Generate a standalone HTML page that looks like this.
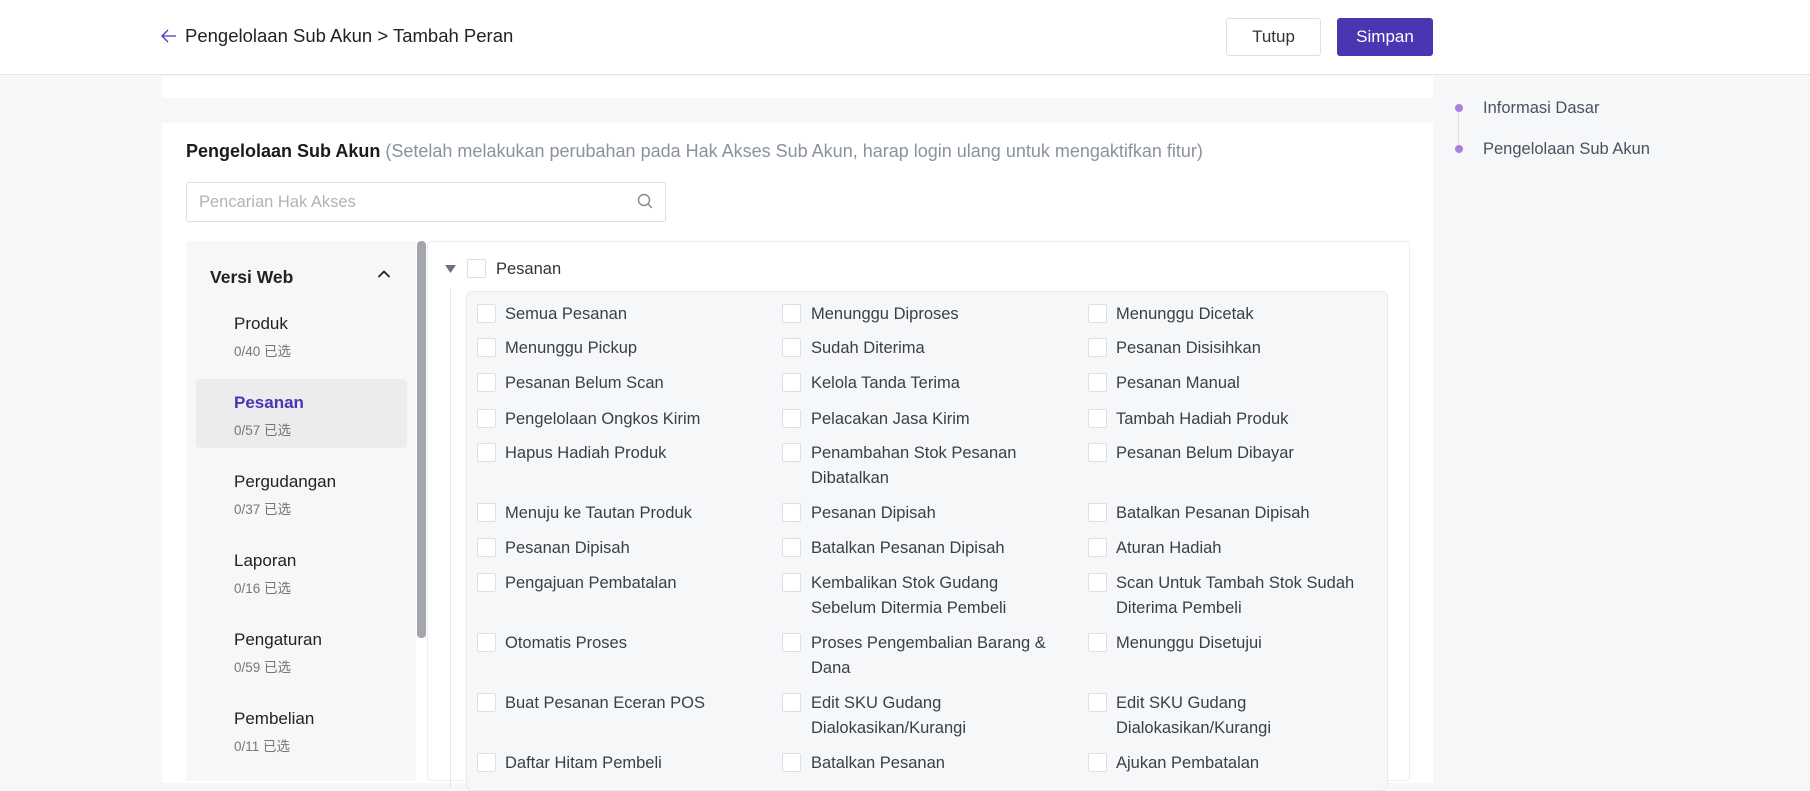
<!DOCTYPE html>
<html><head><meta charset="utf-8"><style>
*{box-sizing:border-box;margin:0;padding:0}
body{width:1810px;height:777px;overflow:hidden;background:#f6f7f9;font-family:"Liberation Sans","Noto Sans CJK SC",sans-serif;color:#222;position:relative}
.a{position:absolute}
.hdr{left:0;top:0;width:1810px;height:75px;background:#fff;border-bottom:1px solid #e6e7ea}
.btn{top:18px;height:38px;border-radius:3px;font-size:17px;display:flex;align-items:center;justify-content:center}
.cb{position:absolute;width:19px;height:19px;background:#fff;border:1px solid #dcdfe3;border-radius:2px}
.it{position:absolute;font-size:16.5px;color:#3a3f47;line-height:25px}
.nm{position:absolute;left:234px;font-size:17px;color:#222}
.sb{position:absolute;left:234px;font-size:13.5px;color:#777}
</style></head><body>
<div class="a hdr"></div>
<svg class="a" style="left:160px;top:28px" width="18" height="16" viewBox="0 0 18 16"><path d="M16 8H3M8 2L2 8l6 6" stroke="#4b36b3" stroke-width="1.3" fill="none"/></svg>
<div class="a" style="left:185px;top:25px;font-size:18.5px;color:#222">Pengelolaan Sub Akun &gt; Tambah Peran</div>
<div class="a btn" style="left:1226px;width:95px;border:1px solid #dcdfe3;background:#fff;color:#333">Tutup</div>
<div class="a btn" style="left:1337px;width:96px;background:#4a35b3;color:#fff">Simpan</div>

<div class="a" style="left:162px;top:76px;width:1271px;height:22px;background:#fff"></div>
<div class="a" style="left:162px;top:123px;width:1271px;height:660px;background:#fff"></div>

<div class="a" style="left:1455px;top:104px;width:8px;height:8px;border-radius:50%;background:#a880e0"></div>
<div class="a" style="left:1458px;top:112px;width:1px;height:34px;background:#ddd"></div>
<div class="a" style="left:1455px;top:145px;width:8px;height:8px;border-radius:50%;background:#a880e0"></div>
<div class="a" style="left:1483px;top:99px;font-size:16.5px;color:#4a5160">Informasi Dasar</div>
<div class="a" style="left:1483px;top:140px;font-size:16.5px;color:#4a5160">Pengelolaan Sub Akun</div>

<div class="a" style="left:186px;top:141px;font-size:18px;white-space:nowrap"><b style="color:#1a1a1a">Pengelolaan Sub Akun</b> <span style="color:#8a929f">(Setelah melakukan perubahan pada Hak Akses Sub Akun, harap login ulang untuk mengaktifkan fitur)</span></div>
<div class="a" style="left:186px;top:182px;width:480px;height:40px;border:1px solid #dcdfe3;border-radius:3px"></div>
<div class="a" style="left:199px;top:193px;font-size:16.5px;color:#b0b4ba">Pencarian Hak Akses</div>
<svg class="a" style="left:637px;top:193px" width="17" height="17" viewBox="0 0 17 17"><circle cx="7" cy="7" r="5.5" stroke="#888" stroke-width="1.4" fill="none"/><path d="M11 11l4 4" stroke="#888" stroke-width="1.4"/></svg>

<div class="a" style="left:186px;top:241px;width:230px;height:540px;background:#f6f7f9;border-radius:4px 0 0 0"></div>
<div class="a" style="left:417px;top:241px;width:9px;height:397px;background:#a3a7ad;border-radius:4px"></div>
<div class="a" style="left:427px;top:241px;width:983px;height:540px;border:1px solid #eceef0;border-radius:4px;background:#fff"></div>

<div class="a" style="left:210px;top:267px;font-size:17.5px;font-weight:bold;color:#222">Versi Web</div>
<svg class="a" style="left:377px;top:269px" width="14" height="10" viewBox="0 0 14 10"><path d="M1.5 8L7 2.5 12.5 8" stroke="#222" stroke-width="1.8" fill="none"/></svg>
<div class="a" style="left:196px;top:379px;width:211px;height:69px;background:#ebecee;border-radius:4px"></div>
<div class="nm" style="top:314px">Produk</div><div class="sb" style="top:340px">0/40 已选</div>
<div class="nm" style="top:393px;color:#4a35b3;font-weight:bold">Pesanan</div><div class="sb" style="top:419px">0/57 已选</div>
<div class="nm" style="top:472px">Pergudangan</div><div class="sb" style="top:498px">0/37 已选</div>
<div class="nm" style="top:551px">Laporan</div><div class="sb" style="top:577px">0/16 已选</div>
<div class="nm" style="top:630px">Pengaturan</div><div class="sb" style="top:656px">0/59 已选</div>
<div class="nm" style="top:709px">Pembelian</div><div class="sb" style="top:735px">0/11 已选</div>

<svg class="a" style="left:445px;top:265px" width="11" height="8" viewBox="0 0 11 8"><path d="M0 0h11L5.5 8z" fill="#6b7280"/></svg>
<div class="cb" style="left:467px;top:259px"></div>
<div class="it" style="left:496px;top:257px;color:#333">Pesanan</div>
<div class="a" style="left:450px;top:288px;width:1px;height:500px;background:#e4e6e9"></div>
<div class="a" style="left:466px;top:291px;width:922px;height:500px;background:#f6f7f9;border:1px solid #e8eaed;border-radius:6px"></div>

<div id="g"></div>
<script>
var rows=[[313,"Semua Pesanan","Menunggu Diproses","Menunggu Dicetak"],
[347,"Menunggu Pickup","Sudah Diterima","Pesanan Disisihkan"],
[382,"Pesanan Belum Scan","Kelola Tanda Terima","Pesanan Manual"],
[418,"Pengelolaan Ongkos Kirim","Pelacakan Jasa Kirim","Tambah Hadiah Produk"],
[452,"Hapus Hadiah Produk","Penambahan Stok Pesanan<br>Dibatalkan","Pesanan Belum Dibayar"],
[512,"Menuju ke Tautan Produk","Pesanan Dipisah","Batalkan Pesanan Dipisah"],
[547,"Pesanan Dipisah","Batalkan Pesanan Dipisah","Aturan Hadiah"],
[582,"Pengajuan Pembatalan","Kembalikan Stok Gudang<br>Sebelum Ditermia Pembeli","Scan Untuk Tambah Stok Sudah<br>Diterima Pembeli"],
[642,"Otomatis Proses","Proses Pengembalian Barang &amp;<br>Dana","Menunggu Disetujui"],
[702,"Buat Pesanan Eceran POS","Edit SKU Gudang<br>Dialokasikan/Kurangi","Edit SKU Gudang<br>Dialokasikan/Kurangi"],
[762,"Daftar Hitam Pembeli","Batalkan Pesanan","Ajukan Pembatalan"]];
var cx=[477,782,1088],tx=[505,811,1116],h="";
rows.forEach(function(r){for(var i=0;i<3;i++){h+='<div class="cb" style="left:'+cx[i]+'px;top:'+(r[0]-9)+'px"></div><div class="it" style="left:'+tx[i]+'px;top:'+(r[0]-11)+'px">'+r[i+1]+'</div>';}});
document.getElementById("g").innerHTML=h;
</script>
</body></html>
